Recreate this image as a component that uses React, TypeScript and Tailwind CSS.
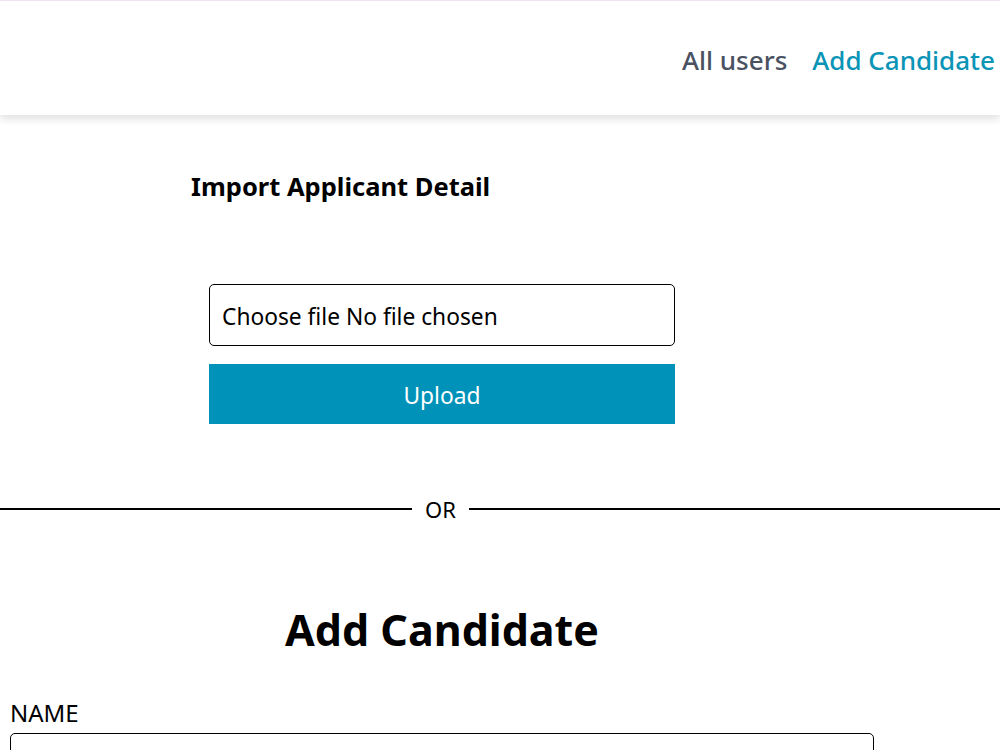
import React from "react";

const font = { fontFamily: '"Noto Sans", "Open Sans", sans-serif' };

const Navbar = () => {
  return (
    <header className="h-[115px] border-t border-[#f0e2f0] bg-white shadow-[0_4px_8px_rgba(0,0,0,0.12)] flex justify-end items-center gap-[25px] pr-[5px] pt-[4px]">
      <a href="#" className="text-[26px] font-medium text-[#4a5262]">
        All users
      </a>
      <a href="#" className="text-[26px] font-medium text-[#0a94b6]">
        Add Candidate
      </a>
    </header>
  );
};

const ImportSection = () => {
  return (
    <section className="w-[884px]">
      <h2 className="pl-[191px] pt-[55px] text-[25.5px] font-bold text-black leading-[32px]">
        Import Applicant Detail
      </h2>
      <form className="ml-[209px] w-[466px] mt-[82px] flex flex-col gap-[18px]">
        <div className="h-[62px] border border-black rounded-[5px] flex items-center px-[12px] pt-[4px] text-[22.75px] text-black">
          Choose file No file chosen
        </div>
        <button type="button" className="h-[60px] pt-[4px] bg-[#0092b9] text-white text-[22.75px]">
          Upload
        </button>
      </form>
    </section>
  );
};

const OrDivider = () => {
  return (
    <div className="mt-[71px] flex items-center">
      <div className="w-[412px] h-[2px] bg-black" />
      <span className="px-[13px] text-[22px] text-black leading-[28px]">OR</span>
      <div className="flex-1 h-[2px] bg-black" />
    </div>
  );
};

const CandidateForm = () => {
  return (
    <section className="w-[884px] pt-[79px]">
      <h1 className="text-center text-[43px] font-bold leading-[56px] text-black">Add Candidate</h1>
      <div className="mt-[40px] px-[10px]">
        <label className="block text-[24px] text-black leading-[30px]">NAME</label>
        <input className="mt-[5px] w-[864px] h-[50px] border border-black rounded-[5px]" />
      </div>
    </section>
  );
};

export default function App() {
  return (
    <div className="w-[1000px] h-[750px] overflow-hidden bg-white" style={font}>
      <Navbar />
      <ImportSection />
      <OrDivider />
      <CandidateForm />
    </div>
  );
}
